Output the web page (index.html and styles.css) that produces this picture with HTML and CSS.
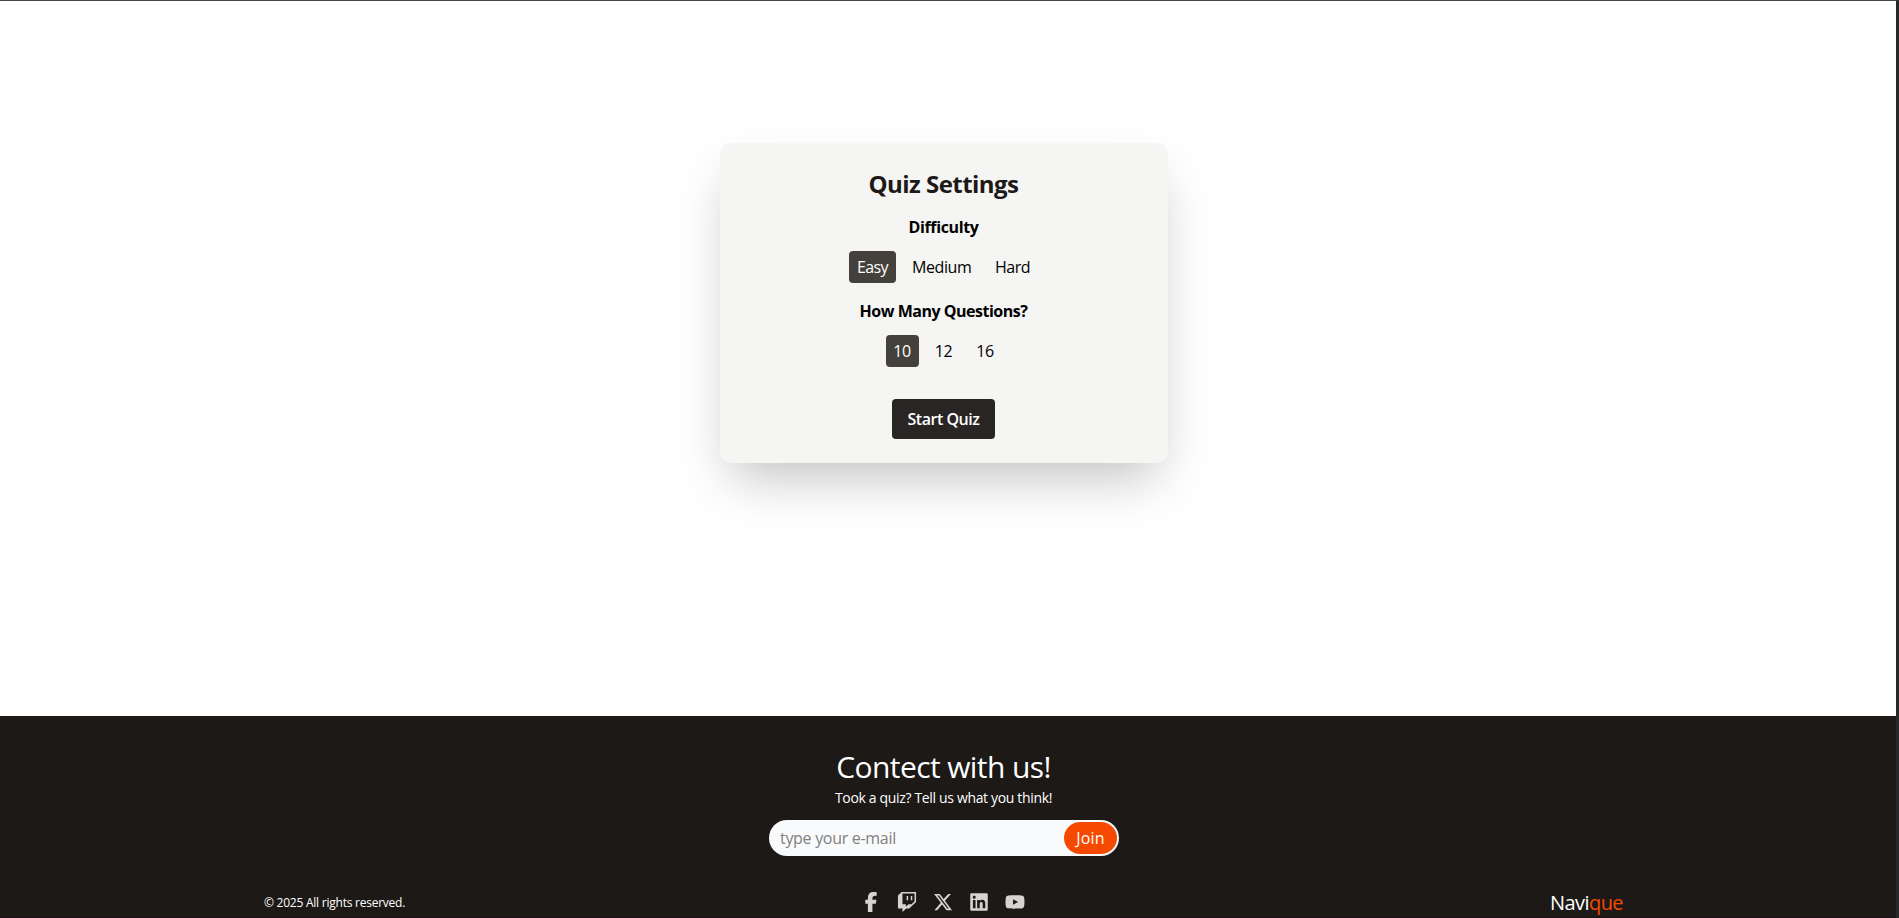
FILE: index.html
```html
<!DOCTYPE html>
<html lang="en">
<head>
<meta charset="utf-8">
<title>Navique</title>
<link rel="stylesheet" href="styles.css">
</head>
<body>
<div class="page">
  <main class="main">
    <section class="card">
      <h1 class="card-title">Quiz Settings</h1>
      <h2 class="label">Difficulty</h2>
      <div class="options">
        <button class="option selected easy">Easy</button>
        <button class="option medium">Medium</button>
        <button class="option hard">Hard</button>
      </div>
      <h2 class="label label-count">How Many Questions?</h2>
      <div class="options">
        <button class="option number selected">10</button>
        <button class="option number">12</button>
        <button class="option number">16</button>
      </div>
      <button class="start">Start Quiz</button>
    </section>
  </main>
  <footer class="footer">
    <h2 class="footer-title">Contect with us!</h2>
    <p class="footer-text">Took a quiz? Tell us what you think!</p>
    <form class="join-form">
      <input class="email" type="email" placeholder="type your e-mail">
      <button class="join" type="button">Join</button>
    </form>
    <div class="footer-row">
      <p class="copyright">© 2025 All rights reserved.</p>
      <div class="socials">
        <svg class="icon" viewBox="0 0 320 512"><path d="M80 299.3V512H196V299.3h86.5l18-97.8H196V166.9c0-51.7 20.3-71.5 72.7-71.5c16.3 0 29.4 .4 37 1.2V7.9C291.4 4 256.4 0 236.2 0C129.3 0 80 50.5 80 159.4v42.1H14v97.8H80z"/></svg>
        <svg class="icon" viewBox="0 0 512 512"><path d="M391.17 103.47h-38.63v109.7h38.63ZM285 103h-38.63v109.75H285ZM120.83 0 24.31 91.42v329.16h115.83V512l96.53-91.42h77.25L487.69 256V0Zm328.24 237.75-77.22 73.12h-77.24l-67.6 64v-64h-86.87V36.58h308.93Z"/></svg>
        <svg class="icon" viewBox="0 0 512 512"><path d="M389.2 48h70.6L305.6 224.2 487 464H345L233.7 318.6 106.5 464H35.8L200.7 275.5 26.8 48H172.4L272.9 180.9 389.2 48zM364.4 421.8h39.1L151.1 88h-42L364.4 421.8z"/></svg>
        <svg class="icon" viewBox="0 0 448 512"><path d="M416 32H31.9C14.3 32 0 46.5 0 64.3v383.4C0 465.5 14.3 480 31.9 480H416c17.6 0 32-14.5 32-32.3V64.3c0-17.8-14.4-32.3-32-32.3zM135.4 416H69V202.2h66.5V416zm-33.2-243c-21.3 0-38.5-17.3-38.5-38.5S80.9 96 102.2 96c21.2 0 38.5 17.3 38.5 38.5 0 21.3-17.2 38.5-38.5 38.5zm282.1 243h-66.4V312c0-24.8-.5-56.7-34.5-56.7-34.6 0-39.9 27-39.9 54.9V416h-66.4V202.2h63.7v29.2h.9c8.9-16.8 30.6-34.5 62.9-34.5 67.2 0 79.7 44.3 79.7 101.9V416z"/></svg>
        <svg class="icon" viewBox="0 0 576 512"><path d="M549.655 124.083c-6.281-23.65-24.787-42.276-48.284-48.597C458.781 64 288 64 288 64S117.22 64 74.629 75.486c-23.497 6.322-42.003 24.947-48.284 48.597-11.412 42.867-11.412 132.305-11.412 132.305s0 89.438 11.412 132.305c6.281 23.65 24.787 41.5 48.284 47.821C117.22 448 288 448 288 448s170.78 0 213.371-11.486c23.497-6.321 42.003-24.171 48.284-47.821 11.412-42.867 11.412-132.305 11.412-132.305s0-89.438-11.412-132.305zm-317.51 213.508V175.185l142.739 81.205-142.739 81.201z"/></svg>
      </div>
      <p class="brand">Navi<span class="accent">que</span></p>
    </div>
  </footer>
</div>
</body>
</html>
```
FILE: styles.css
```css
* { box-sizing: border-box; margin: 0; padding: 0; }
body {
  height: 918px;
  overflow: hidden;
  background: #fff;
  border-top: 1px solid #3c4648;
  border-right: 3px solid #26292a;
  font-family: "Open Sans", "Noto Sans", sans-serif;
  font-size: 16px;
  line-height: 24px;
  color: #000;
}
button, input { font: inherit; color: inherit; border: 0; background: none; }
.page { display: flex; flex-direction: column; height: 917px; }
.main {
  height: 715px;
  padding: 142px 8px 0 0;
  display: flex;
  justify-content: center;
  align-items: flex-start;
}
.card {
  width: 448px;
  height: 320px;
  padding: 24px 25px 24px 24px;
  border-radius: 12px;
  background: #f5f5f4;
  box-shadow: 0 25px 50px -12px rgba(0, 0, 0, .25);
  display: flex;
  flex-direction: column;
  align-items: center;
}
.card-title {
  padding-top: 1px;
  font-size: 24px;
  line-height: 32px;
  font-weight: 700;
  letter-spacing: -.535px;
  color: #1c1917;
  margin-bottom: 15px;
}
.label { font-size: 16px; font-weight: 700; letter-spacing: -.37px; margin-bottom: 12px; }
.label-count { letter-spacing: -.48px; }
.options { display: flex; gap: 8px; margin-bottom: 16px; }
.options + .start { margin-top: 16px; }
.option { height: 32px; padding: 4px 8px; border-radius: 4px; white-space: nowrap; }
.easy { width: 47px; letter-spacing: -.6px; }
.medium { width: 75px; letter-spacing: -.42px; }
.hard { width: 51px; letter-spacing: -.5px; }
.number { width: 33px; padding: 4px 7px; letter-spacing: -.4px; }
.number + .number { margin-left: .5px; }
.selected { background: #44403b; color: #fff; }
.start {
  width: 103px;
  height: 40px;
  flex: none;
  border-radius: 4px;
  background: #292524;
  color: #fff;
  font-weight: 600;
  letter-spacing: -.47px;
  white-space: nowrap;
}
.footer {
  flex: 1;
  padding: 33px 8px 0 0;
  background: #1c1917;
  border-bottom: 1px solid #190f15;
  color: #fff;
  display: flex;
  flex-direction: column;
  align-items: center;
}
.footer-title { padding-right: 1px; font-size: 30px; line-height: 36px; font-weight: 400; letter-spacing: -.6px; }
.footer-text { margin-top: 3px; padding-right: 1px; font-size: 14px; line-height: 20px; letter-spacing: -.34px; }
.join-form {
  width: 350px;
  height: 36px;
  margin-top: 12px;
  padding: 2px;
  display: flex;
  border-radius: 18px;
  background: #f9fafb;
}
.email { flex: 1; min-width: 0; padding-left: 9px; letter-spacing: -.3px; }
.email::placeholder { color: #808080; opacity: 1; }
.join { width: 53px; border-radius: 16px; background: #f54900; letter-spacing: .2px; }
.footer-row {
  width: 1360px;
  height: 28px;
  margin-top: 32px;
  display: flex;
  align-items: center;
  justify-content: space-between;
}
.copyright { width: 142px; padding-top: 2px; font-size: 12px; line-height: 16px; letter-spacing: -.24px; white-space: nowrap; }
.socials { display: flex; gap: 16px; margin-left: -70px; }
.icon { width: 20px; height: 20px; fill: #d6d3d1; }
.brand { width: 74px; padding-top: 2px; font-size: 20px; line-height: 28px; letter-spacing: -.56px; white-space: nowrap; }
.accent { color: #f54900; }
```
